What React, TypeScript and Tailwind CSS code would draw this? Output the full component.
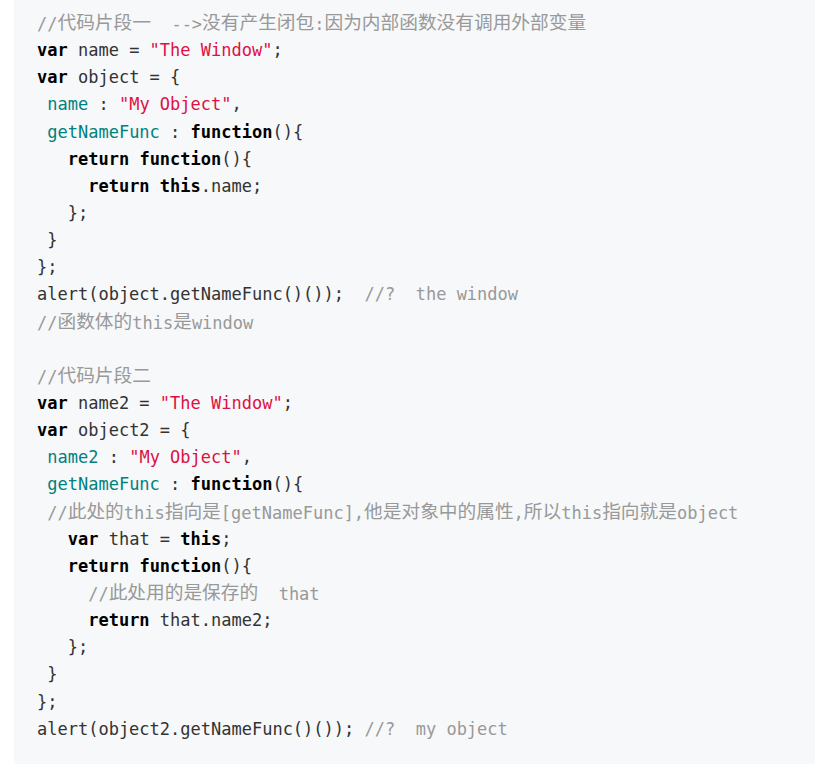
import React from "react";

type Tok = [string, string];

const C = {
  kw: "font-bold text-[#000000]",
  tx: "text-[#333333]",
  st: "text-[#dd1144]",
  pr: "text-[#008080]",
  cm: "text-[#999999]",
};

// split CJK runs so they can get the wider size they have in the shot
const Mixed = ({ text }: { text: string }) => {
  const parts = text.split(/([\u3000-\u9fff\uff00-\uffef]+)/);
  return (
    <>
      {parts.map((p, i) =>
        i % 2 === 1 ? (
          <span key={i} className="text-[18.7px] relative top-[-1px]">
            {p}
          </span>
        ) : (
          <React.Fragment key={i}>{p}</React.Fragment>
        )
      )}
    </>
  );
};

const lines: Tok[][] = [
  [["cm", "//代码片段一  -->没有产生闭包:因为内部函数没有调用外部变量"]],
  [["kw", "var"], ["tx", " name = "], ["st", "\"The Window\""], ["tx", ";"]],
  [["kw", "var"], ["tx", " object = {"]],
  [["tx", " "], ["pr", "name"], ["tx", " : "], ["st", "\"My Object\""], ["tx", ","]],
  [["tx", " "], ["pr", "getNameFunc"], ["tx", " : "], ["kw", "function"], ["tx", "(){"]],
  [["tx", "   "], ["kw", "return"], ["tx", " "], ["kw", "function"], ["tx", "(){"]],
  [["tx", "     "], ["kw", "return"], ["tx", " "], ["kw", "this"], ["tx", ".name;"]],
  [["tx", "   };"]],
  [["tx", " }"]],
  [["tx", "};"]],
  [["tx", "alert(object.getNameFunc()());  "], ["cm", "//?  the window"]],
  [["cm", "//函数体的this是window"]],
  [],
  [["cm", "//代码片段二"]],
  [["kw", "var"], ["tx", " name2 = "], ["st", "\"The Window\""], ["tx", ";"]],
  [["kw", "var"], ["tx", " object2 = {"]],
  [["tx", " "], ["pr", "name2"], ["tx", " : "], ["st", "\"My Object\""], ["tx", ","]],
  [["tx", " "], ["pr", "getNameFunc"], ["tx", " : "], ["kw", "function"], ["tx", "(){"]],
  [["tx", " "], ["cm", "//此处的this指向是[getNameFunc],他是对象中的属性,所以this指向就是object"]],
  [["tx", "   "], ["kw", "var"], ["tx", " that = "], ["kw", "this"], ["tx", ";"]],
  [["tx", "   "], ["kw", "return"], ["tx", " "], ["kw", "function"], ["tx", "(){"]],
  [["tx", "     "], ["cm", "//此处用的是保存的  that"]],
  [["tx", "     "], ["kw", "return"], ["tx", " that.name2;"]],
  [["tx", "   };"]],
  [["tx", " }"]],
  [["tx", "};"]],
  [["tx", "alert(object2.getNameFunc()()); "], ["cm", "//?  my object"]],
];

const App = () => {
  return (
    <main className="min-h-[764px] bg-white pl-[14px]">
      <pre
        className="bg-[#f6f8fa] rounded-bl-[4px] pl-[23px] pt-[10px] pb-[21px] text-[17px] leading-[27.15px] whitespace-pre"
        style={{ fontFamily: '"DejaVu Sans Mono", "Noto Sans CJK SC", monospace' }}
      >
        {lines.map((ln, i) => (
          <div key={i} className="h-[27.15px]">
            {ln.map(([k, t], j) => (
              <span key={j} className={C[k as keyof typeof C]}>
                <Mixed text={t} />
              </span>
            ))}
          </div>
        ))}
      </pre>
    </main>
  );
};

export default App;
